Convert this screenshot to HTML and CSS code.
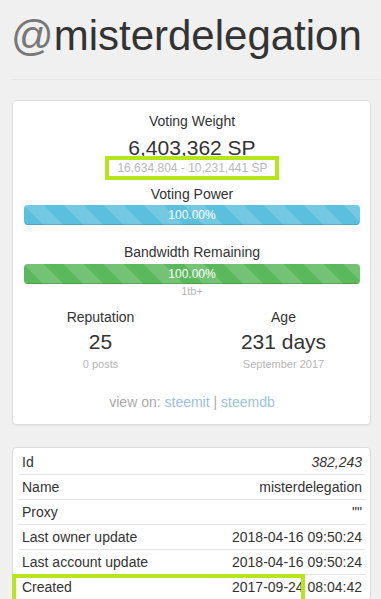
FILE: index.html
```html
<!DOCTYPE html>
<html lang="en">
<head>
    <meta charset="UTF-8">
    <meta name="viewport" content="width=device-width, initial-scale=1.0">
    <title>@misterdelegation</title>
    <link rel="stylesheet" href="styles.css">
</head>
<body>

    <div class="page-header">
        <h1><span class="at">@</span>misterdelegation</h1>
    </div>

    <div class="panel summary">
        <div class="label">Voting Weight</div>
        <div class="big">6,403,362 SP</div>
        <div class="range-wrap">
            <span class="range">16,634,804 - 10,231,441 SP</span>
        </div>

        <div class="label power">Voting Power</div>
        <div class="progress">
            <div class="bar bar-info" style="width: 100%">100.00%</div>
        </div>

        <div class="label bandwidth">Bandwidth Remaining</div>
        <div class="progress">
            <div class="bar bar-success" style="width: 100%">100.00%</div>
        </div>
        <div class="muted">1tb+</div>

        <div class="stats">
            <div class="stat">
                <div class="label">Reputation</div>
                <div class="big">25</div>
                <div class="muted">0 posts</div>
            </div>
            <div class="stat">
                <div class="label">Age</div>
                <div class="big">231 days</div>
                <div class="muted">September 2017</div>
            </div>
        </div>

        <div class="view-on">view on: <a href="#">steemit</a> | <a href="#">steemdb</a></div>
    </div>

    <div class="panel details">
        <table class="props">
            <tr><td>Id</td><td class="num">382,243</td></tr>
            <tr><td>Name</td><td>misterdelegation</td></tr>
            <tr><td>Proxy</td><td>""</td></tr>
            <tr><td>Last owner update</td><td>2018-04-16 09:50:24</td></tr>
            <tr><td>Last account update</td><td>2018-04-16 09:50:24</td></tr>
            <tr><td>Created</td><td>2017-09-24 08:04:42</td></tr>
        </table>
        <div class="mark"></div>
    </div>

</body>
</html>
```

FILE: styles.css
```css
body {
    margin: 0;
    background: #f0f0f0;
    font-family: "Liberation Sans", Arial, sans-serif;
    font-size: 14px;
    color: #333;
    overflow: hidden;
}

.page-header {
    margin-left: 12px;
    padding: 13px 0 20px 0;
    border-bottom: 1px solid #e6e6e6;
}

.page-header h1 {
    margin: 0;
    font-size: 42px;
    font-weight: normal;
    line-height: 46px;
    color: #333;
    text-indent: -1px;
}

.at {
    color: #777;
}

.panel {
    background: #fff;
    border: 1px solid #ddd;
    border-radius: 4px;
    box-shadow: 0 1px 1px rgba(0, 0, 0, 0.05);
    margin: 20px 10px 0 12px;
}

.summary {
    padding: 10px 10px 12px 11px;
    text-align: center;
}

.label {
    line-height: 20px;
}

.big {
    font-size: 21px;
    line-height: 23px;
    margin-top: 5px;
}

.range-wrap {
    display: flex;
    justify-content: center;
    margin-top: -3px;
}

.range {
    border: 4px solid #b5e61d;
    padding: 0 7px 0 8px;
    font-size: 12px;
    line-height: 16px;
    color: #b8b8b8;
}

.power {
    margin-top: 4px;
}

.bandwidth {
    margin-top: 17px;
}

.progress {
    height: 20px;
    margin-top: 1px;
    background: #f5f5f5;
    border-radius: 4px;
    overflow: hidden;
}

.bandwidth + .progress {
    margin-top: 2px;
}

.bar {
    height: 20px;
    line-height: 20px;
    font-size: 12px;
    color: #fff;
    text-align: center;
    box-shadow: inset 0 -1px 0 rgba(0, 0, 0, 0.15);
    background-image: linear-gradient(45deg, rgba(255, 255, 255, 0.15) 25%, transparent 25%, transparent 50%, rgba(255, 255, 255, 0.15) 50%, rgba(255, 255, 255, 0.15) 75%, transparent 75%, transparent);
    background-size: 40px 40px;
}

.bar-info {
    background-color: #5bc0de;
}

.bar-success {
    background-color: #5cb85c;
}

.muted {
    font-size: 11px;
    line-height: 14px;
    color: #b5b5b5;
}

.stats {
    display: grid;
    grid-template-columns: 1fr 1fr;
    column-gap: 30px;
    margin-top: 9px;
}

.stat .big {
    margin-top: 3px;
}

.stat .muted {
    margin-top: 4px;
}

.view-on {
    margin-top: 21px;
    line-height: 20px;
    color: #aaa;
}

.view-on a {
    color: #9dbfe2;
    text-decoration: none;
}

.details {
    position: relative;
    margin-top: 22px;
    padding: 2px 4px 0 5px;
}

.props {
    width: 100%;
    border-collapse: collapse;
}

.props td {
    padding: 2px 4px;
    line-height: 20px;
    border-top: 1px solid #e3e3e3;
    white-space: nowrap;
}

.props tr:first-child td {
    border-top: none;
}

.props td + td {
    text-align: right;
}

.props .num {
    font-style: italic;
}

/* highlight drawn over the Created row */
.mark {
    position: absolute;
    left: -1px;
    top: 126px;
    width: 293px;
    height: 34px;
    border: 4px solid #b5e61d;
    box-sizing: border-box;
}
```
